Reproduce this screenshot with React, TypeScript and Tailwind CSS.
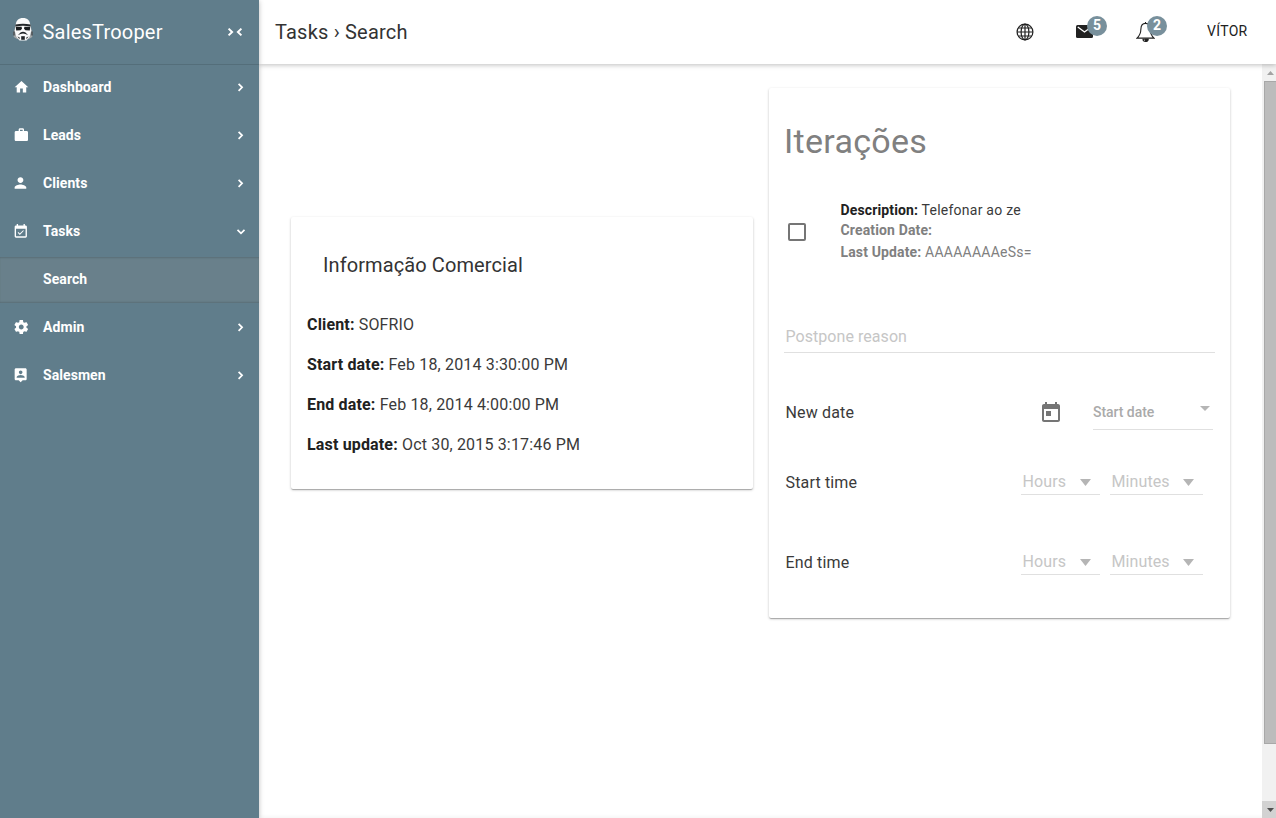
import type { ReactNode } from 'react';

type NavEntry = { label: string; box: string; path: string; open?: boolean };

const primary: NavEntry[] = [
  { label: 'Dashboard', box: '2.500 0 23.500 23.500', path: 'M10 20v-6h4v6h5v-8h3L12 3 2 12h3v8z' },
  {
    label: 'Leads',
    box: '2.500 0 24 24',
    path: 'M20 6h-4V4c0-1.11-.89-2-2-2h-4c-1.11 0-2 .89-2 2v2H4c-1.11 0-1.99.89-1.99 2L2 19c0 1.11.89 2 2 2h16c1.11 0 2-.89 2-2V8c0-1.11-.89-2-2-2zm-6 0h-4V4h4v2z',
  },
  {
    label: 'Clients',
    box: '4.500 1 22 22',
    path: 'M12 12c2.21 0 4-1.79 4-4s-1.79-4-4-4-4 1.79-4 4 1.79 4 4 4zm0 2c-2.67 0-8 1.34-8 4v2h16v-2c0-2.66-5.33-4-8-4z',
  },
  {
    label: 'Tasks',
    box: '3.500 -.5 23.500 23.500',
    path: 'M16.53 11.06L15.47 10l-4.88 4.88-2.12-2.12-1.06 1.06L10.59 17l5.94-5.94zM19 3h-1V1h-2v2H8V1H6v2H5c-1.11 0-1.99.9-1.99 2L3 19c0 1.1.89 2 2 2h14c1.1 0 2-.9 2-2V5c0-1.1-.9-2-2-2zm0 16H5V8h14v11z',
    open: true,
  },
];

const secondary: NavEntry[] = [
  {
    label: 'Admin',
    box: '3 .5 23 23',
    path: 'M19.43 12.98c.04-.32.07-.64.07-.98s-.03-.66-.07-.98l2.11-1.65c.19-.15.24-.42.12-.64l-2-3.46c-.12-.22-.39-.3-.61-.22l-2.49 1c-.52-.4-1.08-.73-1.69-.98l-.38-2.65C14.46 2.18 14.25 2 14 2h-4c-.25 0-.46.18-.49.42l-.38 2.65c-.61.25-1.17.59-1.69.98l-2.49-1c-.23-.09-.49 0-.61.22l-2 3.46c-.13.22-.07.49.12.64l2.11 1.65c-.04.32-.07.65-.07.98s.03.66.07.98l-2.11 1.65c-.19.15-.24.42-.12.64l2 3.46c.12.22.39.3.61.22l2.49-1c.52.4 1.08.73 1.69.98l.38 2.65c.03.24.24.42.49.42h4c.25 0 .46-.18.49-.42l.38-2.65c.61-.25 1.17-.59 1.69-.98l2.49 1c.23.09.49 0 .61-.22l2-3.46c.12-.22.07-.49-.12-.64l-2.11-1.65zM12 15.5c-1.93 0-3.500-1.57-3.500-3.500s1.57-3.500 3.500-3.500 3.500 1.57 3.500 3.500-1.57 3.500-3.500 3.500z',
  },
  {
    label: 'Salesmen',
    box: '3.500 0 24 24',
    path: 'M19 2H5c-1.11 0-2 .9-2 2v14c0 1.1.89 2 2 2h4l3 3 3-3h4c1.1 0 2-.9 2-2V4c0-1.1-.9-2-2-2zm-7 3.3c1.49 0 2.7 1.21 2.7 2.7 0 1.49-1.21 2.7-2.7 2.7-1.49 0-2.7-1.21-2.7-2.7 0-1.49 1.21-2.7 2.7-2.7zM18 16H6v-.9c0-2 4-3.1 6-3.1s6 1.1 6 3.1v.9z',
  },
];

function Chevron({ open }: { open?: boolean }) {
  return (
    <svg className="h-3 w-3" viewBox="0 0 12 12" fill="none" stroke="currentColor" strokeWidth="1.7">
      <path d={open ? 'M2.5 4.8 L6 8.3 L9.5 4.8' : 'M3.6 2.8 L7.1 6.3 L3.6 9.8'} />
    </svg>
  );
}

function NavItem({ item }: { item: NavEntry }) {
  return (
    <li className="flex h-12 items-center pr-3 pl-[15px]">
      <svg className="h-4 w-4 overflow-visible" viewBox={item.box} fill="currentColor">
        <path d={item.path} />
      </svg>
      <span className="ml-3 grow">{item.label}</span>
      <Chevron open={item.open} />
    </li>
  );
}

function Helmet() {
  return (
    <svg className="mb-[5px] h-[23px] w-5" viewBox="0 0 20 23">
      <path d="M3 6.500 1 13l-.8 2 .6 4 3.200 2h12l3.200-2 .6-4-.8-2-2-6.500z" fill="#a3a7a9" />
      <path d="M10 0C5.500 0 3.200 2.200 2.700 6.800L1.800 13 3.500 19l3 3.500h7L16.500 19l1.700-6-.9-6.200C16.800 2.200 14.500 0 10 0z" fill="#fafafa" />
      <path d="M2.500 6.500Q10 5.200 17.500 6.500L17.700 8.400Q10 7.300 2.300 8.400z" fill="#24282b" />
      <path d="M2.800 8.800 8.600 8.800 9 10.800 7.600 12.200 3.200 12.400zM17.200 8.800 11.400 8.800 11 10.800 12.400 12.200 16.800 12.400z" fill="#1a1d1f" />
      <path d="M4.800 17.300 7.500 14.400Q10 13 12.500 14.400L15.200 17.300 12.400 16.100Q10 15 7.600 16.100z" fill="#202427" />
      <path d="M8.200 18.200h3.600v3.600H8.200z" fill="#202326" />
      <path d="M4.400 18.600l2.200.6v2.200zM15.600 18.600l-2.200.6v2.200z" fill="#3c4144" />
      <path d="M1 13.500v4M19 13.500v4" stroke="#30363a" strokeWidth="1.200" />
    </svg>
  );
}

function Sidebar() {
  return (
    <aside className="relative z-20 w-[259px] shrink-0 bg-[#607d8b] text-sm font-bold tracking-[0.07px] text-white shadow-[0_1px_5px_rgba(0,0,0,0.26)]">
      <div className="flex h-[65px] items-center border-b border-[#546e7a] pr-4 pl-[13px]">
        <Helmet />
        <span className="ml-[9.500px] grow text-xl font-normal tracking-[0.2px]">SalesTrooper</span>
        <svg className="h-3 w-4" viewBox="0 0 16 12" fill="none" stroke="currentColor" strokeWidth="2">
          <path d="M1.600 2.600 5.100 6 1.600 9.400M14.400 2.600 10.900 6l3.500 3.400" />
        </svg>
      </div>
      <nav className="-mt-0.5">
        <ul>
          {primary.map((item) => (
            <NavItem key={item.label} item={item} />
          ))}
        </ul>
        <div className="flex h-12 items-center pt-[2px]">
          <div className="flex h-[46px] w-full items-center bg-[#69808b] pb-0.5 pl-[43px] shadow-[inset_0_2px_2px_-1px_rgba(0,0,0,0.15),inset_0_-2px_2px_-1px_rgba(0,0,0,0.15)]">
            Search
          </div>
        </div>
        <ul>
          {secondary.map((item) => (
            <NavItem key={item.label} item={item} />
          ))}
        </ul>
      </nav>
    </aside>
  );
}

function Badge({ children }: { children: ReactNode }) {
  return (
    <span className="absolute -top-[6px] left-[11px] flex h-5 w-5 items-center justify-center rounded-full bg-[#78909c] pb-[2px] text-sm font-bold text-white">
      {children}
    </span>
  );
}

function Header() {
  return (
    <header className="relative z-10 flex h-16 shrink-0 items-center bg-white pr-[28.500px] pl-4 shadow-[0_1px_5px_rgba(0,0,0,0.26)]">
      <h1 className="grow text-xl tracking-[0.2px] text-[#333]">Tasks › Search</h1>
      <svg className="mr-[42px] h-[18px] w-[18px]" viewBox="0 0 18 18" fill="none" stroke="currentColor" strokeWidth="1.200">
        <circle cx="9" cy="9" r="7.900" />
        <ellipse cx="9" cy="9" rx="3.900" ry="7.900" />
        <path d="M9 1v16M1 9h16M2.200 5h13.600M2.200 13h13.600" />
      </svg>
      <div className="relative mr-[43px] h-5 w-[17px]">
        <svg className="h-[18px] w-[17px]" viewBox="0 0 17 18">
          <rect y="3" width="17" height="13" rx="1.500" fill="currentColor" />
          <path d="M1.800 5 8.500 10 15.200 5" fill="none" stroke="white" strokeWidth="1.400" />
        </svg>
        <Badge>5</Badge>
      </div>
      <div className="relative mr-[52px] h-5 w-[19px]">
        <svg className="h-5 w-[19px]" viewBox="0 0 19 20" fill="none" stroke="currentColor" strokeWidth="1.100">
          <path d="M9.500 1.400C6.300 1.400 5 4 4.900 7c-.1 4.700-1.300 6.800-3.900 9.100h17c-2.600-2.300-3.800-4.400-3.900-9.100-.1-3-1.400-5.600-4.600-5.600zM9.500 0v1.500" />
          <path d="M7 17.200h5a2.500 2.200 0 0 1-5 0z" />
          <path d="M9.500 17.200H12a2.500 2.200 0 0 1-2.500 2.200z" fill="currentColor" />
        </svg>
        <Badge>2</Badge>
      </div>
      <span className="mb-0.5 text-sm font-normal tracking-[0.3px]">VÍTOR</span>
    </header>
  );
}

function Detail({ label, value }: { label: string; value: string }) {
  return (
    <p className="h-10 text-base leading-6 tracking-[0.16px] text-[#3a3a3a]">
      <b className="text-[#212121]">{label}:</b> {value}
    </p>
  );
}

const cardShadow = 'rounded-[2px] bg-white shadow-[0_1px_3px_0_rgba(0,0,0,0.2),0_1px_1px_0_rgba(0,0,0,0.14),0_2px_1px_-1px_rgba(0,0,0,0.12)]';

function InfoCard() {
  return (
    <section className={`mt-[129px] h-[272px] w-[462px] px-4 ${cardShadow}`}>
      <h2 className="px-4 pt-9 text-xl leading-6 tracking-[0.1px] text-[#333]">Informação Comercial</h2>
      <div className="pt-9">
        <Detail label="Client" value="SOFRIO" />
        <Detail label="Start date" value="Feb 18, 2014 3:30:00 PM" />
        <Detail label="End date" value="Feb 18, 2014 4:00:00 PM" />
        <Detail label="Last update" value="Oct 30, 2015 3:17:46 PM" />
      </div>
    </section>
  );
}

function Picker({ label, width }: { label: string; width: string }) {
  return (
    <div className={`flex h-[26px] items-center justify-between border-b border-[#e0e0e0] pr-[9px] pl-[1.500px] tracking-[0.1px] text-[#c6c6c6] ${width}`}>
      <span>{label}</span>
      <svg className="mt-px h-[7px] w-[11px]" viewBox="0 0 11 7" fill="#b5b5b5">
        <path d="M0 0h11L5.500 7z" />
      </svg>
    </div>
  );
}

function TimeRow({ label }: { label: string }) {
  return (
    <div className="flex h-[26px] items-center pr-[11px]">
      <span className="grow pt-0.5">{label}</span>
      <Picker label="Hours" width="w-[79px]" />
      <div className="ml-[10px]">
        <Picker label="Minutes" width="w-[93px]" />
      </div>
    </div>
  );
}

function IterationsCard() {
  return (
    <section className={`h-[530px] w-[461px] pr-[15px] pl-4 text-base tracking-[0.16px] text-[#3a3a3a] ${cardShadow}`}>
      <h2 className="-ml-px pt-[33px] text-[34px] leading-10 tracking-[0.3px] text-[#808080]">Iterações</h2>
      <div className="flex items-center pt-[38px] pl-[3px]">
        <div className="mt-0.5 h-[18px] w-[18px] rounded-[2px] border-2 border-[#757575]" />
        <div className="ml-[34.500px] text-sm tracking-[0.24px] text-[#808080]">
          <p className="h-5 leading-[22px] text-[#3a3a3a]"><b className="tracking-[0.14px] text-[#212121]">Description:</b> Telefonar ao ze</p>
          <p className="h-[22px] leading-[22px]"><b className="tracking-[0.14px]">Creation Date:</b></p>
          <p className="h-[22px] leading-[22px]"><b className="tracking-[0.14px]">Last Update:</b> AAAAAAAAeSs=</p>
        </div>
      </div>
      <div className="mt-[58px] -ml-px h-8 border-b border-[#e0e0e0] pl-[1.500px] leading-8 tracking-[0.05px] text-[#c6c6c6]">Postpone reason</div>
      <div className="mt-[41px] flex h-9 items-center pr-0.5 pl-[0.500px]">
        <span className="grow pt-0.5">New date</span>
        <svg className="mt-0.5 mr-[30px] h-6 w-6" viewBox="0 0 24 24" fill="#757575">
          <path d="M19 3h-1V1h-2v2H8V1H6v2H5c-1.110 0-1.990.9-1.990 2L3 19c0 1.100.890 2 2 2h14c1.100 0 2-.9 2-2V5c0-1.100-.9-2-2-2zm0 16H5V8h14v11zM7 10h5v5H7z" />
        </svg>
        <div className="flex h-9 w-[120px] items-center border-b border-[#e0e0e0] pr-[3px] text-sm font-medium text-[#aaa]">
          <span className="grow tracking-[-0.05px]">Start date</span>
          <svg className="mb-[6px] h-[5px] w-[10px]" viewBox="0 0 10 5" fill="#b5b5b5">
            <path d="M0 0h10L5 5z" />
          </svg>
        </div>
      </div>
      <div className="mt-[39px] pr-px pl-[0.500px]">
        <TimeRow label="Start time" />
      </div>
      <div className="mt-[54px] pr-px pl-[0.500px]">
        <TimeRow label="End time" />
      </div>
    </section>
  );
}

function Scrollbar() {
  return (
    <div className="flex w-[14px] shrink-0 flex-col items-end bg-[#f1f1f1]">
      <div className="flex h-[17px] w-full items-center justify-center pl-[3px]">
        <svg className="h-1 w-[7px]" viewBox="0 0 7 4" fill="#a3a3a3"><path d="M0 4h7L3.500 0z" /></svg>
      </div>
      <div className="h-[663px] w-3 border border-r-0 border-[#a8a8a8] bg-[#bcbcbc]" />
      <div className="grow" />
      <div className="flex h-[17px] w-full items-center justify-center bg-[#d2d2d2] pl-[3px]">
        <svg className="h-1 w-[7px]" viewBox="0 0 7 4" fill="#505050"><path d="M0 0h7L3.500 4z" /></svg>
      </div>
    </div>
  );
}

export default function App() {
  return (
    <div className="flex h-[818px] w-[1276px] overflow-hidden bg-white font-['Roboto',sans-serif] text-[#212121]">
      <Sidebar />
      <div className="flex grow flex-col">
        <Header />
        <div className="flex grow">
          <main className="flex grow items-start gap-4 bg-linear-to-t from-[#f7f7f7] to-white to-[4px] pt-6 pl-8">
            <InfoCard />
            <IterationsCard />
          </main>
          <Scrollbar />
        </div>
      </div>
    </div>
  );
}
